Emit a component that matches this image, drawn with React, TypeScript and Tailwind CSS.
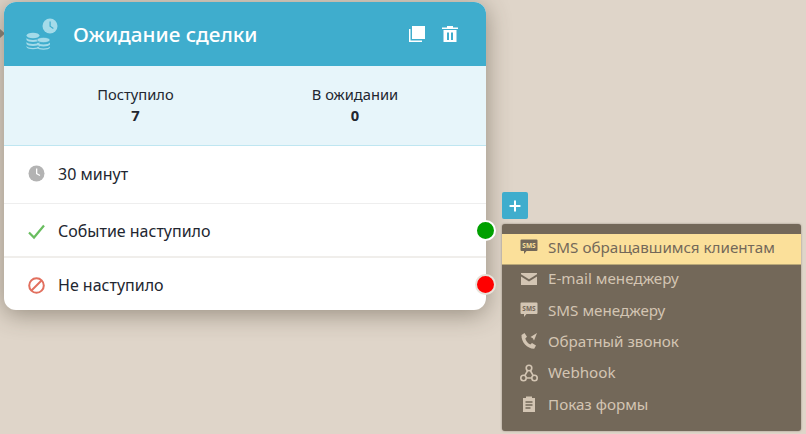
import React from "react";
import { Plus } from "lucide-react";

const font = "font-['Noto_Sans',sans-serif]";

const SmsIcon = ({ fill, text }: { fill: string; text: string }) => (
  <svg width="18" height="18" viewBox="0 0 18 18">
    <path d="M1.500 1.500h15a1 1 0 0 1 1 1v9.500a1 1 0 0 1-1 1H6.500l-2.500 3V13H1.500a1 1 0 0 1-1-1V2.500a1 1 0 0 1 1-1z" fill={fill} />
    <text x="9" y="9.500" textAnchor="middle" fontSize="6.500" fontWeight="700" fill={text}>
      SMS
    </text>
  </svg>
);

const MailIcon = () => (
  <svg width="18" height="18" viewBox="0 0 18 18" fill="#d3c5b3">
    <path d="M1 3h16v1.300L9 9.300 1 4.300z" />
    <path d="M1 6.500l8 5 8-5V15H1z" />
  </svg>
);

const CallbackIcon = () => (
  <svg width="18" height="18" viewBox="0 0 18 18" fill="#d3c5b3">
    <path d="M4.500 1L7 4.800 5.300 6.500c.6 2.500 2.500 4.800 5 6l1.700-1.600 4 2.500-1.800 3.400C7.500 17 1 10 1.500 3z" />
    <path d="M17 1l-3 7.500-1.200-2.300L10.500 5z" />
  </svg>
);

const WebhookIcon = () => (
  <svg width="18" height="18" viewBox="0 0 18 18" fill="none" stroke="#d3c5b3" strokeWidth="1.600">
    <circle cx="9" cy="4" r="2.800" />
    <circle cx="3.500" cy="14" r="2.700" />
    <circle cx="14.500" cy="14" r="2.700" />
    <path d="M7.700 6.500L4.800 11.700M10.300 6.500l2.900 5.200M6.200 14h5.600" />
  </svg>
);

const FormIcon = () => (
  <svg width="18" height="18" viewBox="0 0 18 18">
    <path d="M3 3h3V1.500h6V3h3v14H3z" fill="#d3c5b3" />
    <path d="M5.500 7h7M5.500 10h7M5.500 13h5" stroke="#736859" strokeWidth="1.300" />
  </svg>
);

const menuItems = [
  { title: "SMS обращавшимся клиентам", icon: <SmsIcon fill="#736859" text="#fbe09a" />, active: true },
  { title: "E-mail менеджеру", icon: <MailIcon /> },
  { title: "SMS менеджеру", icon: <SmsIcon fill="#d3c5b3" text="#736859" /> },
  { title: "Обратный звонок", icon: <CallbackIcon /> },
  { title: "Webhook", icon: <WebhookIcon /> },
  { title: "Показ формы", icon: <FormIcon /> },
];

const App = () => {
  return (
    <div className={`relative w-[806px] h-[434px] overflow-hidden bg-[#dfd5c9] ${font}`}>
      {/* connector tip */}
      <svg className="absolute left-0 top-[29px]" width="5" height="9" viewBox="0 0 5 9">
        <path d="M0 0l5 4.500L0 9z" fill="#8c857c" />
      </svg>

      {/* node card */}
      <div className="absolute left-[4px] top-[2px] w-[482px] h-[308px] flex flex-col rounded-[12px] bg-white shadow-[0_4px_24px_rgba(60,50,35,0.45)]">
        <div className="h-[64px] flex items-center rounded-t-[12px] bg-[#3fadcd] pl-[20px] pr-[27px]">
          <svg width="34" height="34" viewBox="0 0 34 34" fill="#a4dbe9">
            <circle cx="26" cy="9" r="7.500" />
            <path d="M25.500 4.500h1.200V9l3 2-.7 1-3.500-2.400z" fill="#3fadcd" />
            <ellipse cx="9" cy="18.500" rx="6.500" ry="2.800" />
            <path d="M2.500 21c1 2.500 12 2.500 13 0v2c-1 2.500-12 2.500-13 0zM2.500 25c1 2.500 12 2.500 13 0v2c-1 2.500-12 2.500-13 0zM2.500 29c1 2.500 12 2.500 13 0v1c-1 3-12 3-13 0z" />
            <ellipse cx="19.500" cy="23" rx="6.500" ry="2.600" stroke="#3fadcd" strokeWidth="0.500" />
            <path d="M13 25.500c1 2.500 12 2.500 13 0v2c-1 2.500-12 2.500-13 0zM13 29.500c1 2.500 12 2.500 13 0v1c-1 3-12 3-13 0z" />
          </svg>
          <div className="ml-[15px] pt-[1px] text-[20.700px] font-medium leading-none text-white">Ожидание сделки</div>
          <div className="ml-auto flex items-center gap-[15px]">
            <svg width="18" height="18" viewBox="0 0 18 18" fill="#ffffff">
              <rect x="4" y="1" width="13" height="13" />
              <path d="M1 4h1.500v11.500H14V17H1z" />
            </svg>
            <svg width="18" height="18" viewBox="0 0 18 18" fill="#ffffff">
              <path d="M1 2.500h5V1h6v1.500h5V4H1z" />
              <path fillRule="evenodd" d="M2.500 5h13v12h-13zM6 7.500V15h2V7.500zM10 7.500V15h2V7.500z" />
            </svg>
          </div>
        </div>

        <div className="h-[80px] flex border-b border-[#bfe6f1] bg-[#e7f5fa] text-[14.700px] text-[#222630]">
          <div className="ml-[60.500px] w-[142px] flex flex-col items-center pt-[18px] leading-[20px]">
            <div>Поступило</div>
            <div className="mt-[1px] font-bold">7</div>
          </div>
          <div className="ml-[77.500px] w-[142px] flex flex-col items-center pt-[18px] leading-[20px]">
            <div>В ожидании</div>
            <div className="mt-[1px] font-bold">0</div>
          </div>
        </div>

        <div className="h-[58px] flex items-center gap-[13px] border-b border-[#eeeeee] pb-[2px] pl-[24px] text-[16px] text-[#222630]">
          <svg width="17" height="17" viewBox="0 0 17 17">
            <circle cx="8.500" cy="8.500" r="8" fill="#b3b3b3" />
            <path d="M8 3.500h1.300v4.800l3 1.700-.6 1.100-3.700-2.100z" fill="#ffffff" />
          </svg>
          <span>30 минут</span>
        </div>
        <div className="h-[54px] flex items-center gap-[13px] border-b-2 border-[#f0eeeb] pt-[2px] pl-[24px] text-[16px] text-[#222630]">
          <svg width="17" height="17" viewBox="0 0 17 17" fill="none">
            <path d="M1 9.500l5 5L16 2.500" stroke="#69bd5f" strokeWidth="2.200" />
          </svg>
          <span>Событие наступило</span>
        </div>
        <div className="flex-1 flex items-center gap-[13px] pt-[2px] pl-[24px] text-[16px] text-[#222630]">
          <svg width="17" height="17" viewBox="0 0 17 17" fill="none" stroke="#e2705f" strokeWidth="2">
            <circle cx="8.500" cy="8.500" r="7.300" />
            <path d="M3.500 13.500l10-10" />
          </svg>
          <span>Не наступило</span>
        </div>
      </div>

      {/* ports */}
      <div className="absolute left-[475px] top-[220px] w-[21px] h-[21px] rounded-full border-[2px] border-white bg-[#00a000]" />
      <div className="absolute left-[475px] top-[274px] w-[21px] h-[21px] rounded-full border-[2px] border-[#e8e2da] bg-[#ff0000]" />

      {/* add button */}
      <div className="absolute left-[502px] top-[192px] w-[26px] h-[27px] flex items-center justify-center rounded-[2px] bg-[#3fadcd]">
        <Plus size={16} strokeWidth={3} color="#ffffff" />
      </div>

      {/* add menu */}
      <div className="absolute left-[502px] top-[224px] w-[299px] h-[207px] rounded-[3px] bg-[#736859] pt-[10px] text-[15.200px] shadow-[0_0_2px_rgba(60,50,35,0.5)]">
        {menuItems.map((item) => {
          return (
            <div
              key={item.title}
              className={`flex items-center gap-[10px] pl-[18px] pb-[4px] ${
                item.active
                  ? "h-[31px] bg-[#fbe09a] text-[#736859] border-b border-[#b9a878]"
                  : "h-[31.400px] text-[#d3c5b3]"
              }`}
            >
              {item.icon}
              <span>{item.title}</span>
            </div>
          );
        })}
      </div>
    </div>
  );
};

export default App;
